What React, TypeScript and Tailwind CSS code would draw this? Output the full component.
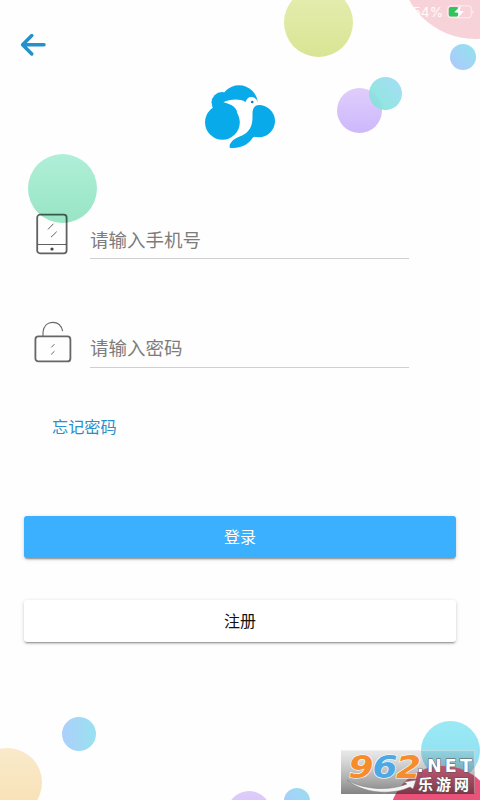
import { useState } from "react";

// Decorative bubbles floating freely behind the form
const bubbles = [
    "left-[284px] top-[-12px] size-[69px] bg-linear-to-b from-[#e5eeb1] to-[#d9e594]",
    "left-[400px] top-[-111px] size-[150px] bg-[#f7d3d9]",
    "left-[450px] top-[44px] size-[26px] bg-linear-to-tr from-[#adc7fd] to-[#91e3ed]",
    "left-[337px] top-[88px] size-[45px] bg-linear-to-b from-[#e0cdfb] to-[#cdb8fb]",
    "left-[369px] top-[77px] size-[33px] bg-linear-to-tr from-[#7fe5d4]/90 to-[#9bd9f6]/90",
    "left-[28px] top-[154px] size-[69px] bg-linear-to-b from-[#afefd8] to-[#98e5c4]",
    "left-[62px] top-[717px] size-[34px] bg-linear-to-r from-[#accffb] to-[#98e1ef]",
    "left-[-27px] top-[748px] size-[69px] bg-linear-to-b from-[#f9eaca] to-[#f8dfb3]",
    "left-[227px] top-[791px] size-[44px] bg-linear-to-b from-[#decdf9] to-[#cdb8fb]",
    "left-[284px] top-[788px] size-[26px] bg-linear-to-tr from-[#adc7fd] to-[#98dfef]",
    "left-[421px] top-[721px] size-[59px] bg-linear-to-b from-[#9aeaf5] to-[#8fdcf0]",
    "left-[389px] top-[766px] size-[108px] bg-[#eb527a]",
];

function BackIcon() {
    return (
        <svg width="28" height="26" viewBox="0 0 28 26" fill="none" stroke="#2590ca" strokeWidth="3.5" strokeLinecap="round" strokeLinejoin="round">
            <path d="M12.8 3.6 3.6 12.7l9.2 9.2M4 12.7h21" />
        </svg>
    );
}

function Logo() {
    return (
        <svg width="70" height="64" viewBox="0 0 70 64">
            <g fill="#08aae9">
                <circle cx="17" cy="17.6" r="10.5" />
                <circle cx="34" cy="19" r="18.8" />
                <path d="M14 18h26v19H14z" />
                <circle cx="53.8" cy="36.1" r="16.2" />
                <path d="M24.7 62.7c-.5-5 2.3-9.5 7-11.9L44 38l8 13.5c-2.6.2-3.9.7-4.9 2-4.7 7.2-13 10.3-22.4 9.2Z" />
            </g>
            {/* bird body, the left puff is drawn over its side */}
            <path
                fill="#fff"
                d="M18.3 17.3c7-3.4 16.5-3.6 22.3-.4 1-3.4 3.6-5.4 6.6-4.8 3.6.7 5.8 3.4 6.6 7.8-4.8.6-6.4 4-6.3 9 .1 7.5-.2 13.4-6 18.8-5.4 4.4-13.2 4.3-17 12.3l-3-8L33 38l-1.3-12.5c-2.5-4.9-7.6-6.8-13.4-8.2Z"
            />
            <circle cx="17.4" cy="37.3" r="17.4" fill="#08aae9" />
            <circle cx="47.2" cy="17" r="1.3" fill="#087fba" />
        </svg>
    );
}

function PhoneIcon() {
    return (
        <svg width="32" height="42" viewBox="0 0 32 42" fill="none" stroke="#000" strokeOpacity=".62">
            <rect x="1.2" y="1.7" width="29.4" height="38.6" rx="2.8" strokeWidth="1.8" />
            <path d="M2 31.5h28" strokeWidth="1" />
            <path d="m12 16.4 5.5-5.7M15 24.2l5.7-5.5" strokeWidth="1" />
            <circle cx="16" cy="36" r="1.6" fill="#444" stroke="none" />
        </svg>
    );
}

function LockIcon() {
    return (
        <svg width="38" height="42" viewBox="0 0 38 42" fill="none" stroke="#666">
            <rect x="1.4" y="15.4" width="35" height="25" rx="3" strokeWidth="1.8" />
            <path d="M9 15V11C9.7 5 13.5 1.4 18.7 1.4c5.2 0 8.8 3.6 10 8.8" strokeWidth="1.1" />
            <path d="m17.4 26.3 3-3.1M17.2 33.4l3.3-3.2" strokeWidth="1" />
        </svg>
    );
}

function Battery() {
    return (
        <svg width="28" height="14" viewBox="0 0 28 14">
            <rect x=".8" y=".8" width="23.5" height="12" rx="3" fill="none" stroke="#fff" strokeOpacity=".65" />
            <path d="M25.5 5v4c1.6-.4 1.6-3.6 0-4Z" fill="#fff" fillOpacity=".65" />
            <rect x="1.8" y="2" width="9.5" height="9.5" rx="1.8" fill="#2ec55b" />
            <path d="M13.8.8 7.2 7.3l4.3.5-1 5.2 6.4-6.8-4.2-.4Z" fill="#fff" />
        </svg>
    );
}

function SiteBadge() {
    return (
        <svg width="134" height="60" viewBox="0 -8 134 60" fontFamily="'Liberation Sans', 'Noto Sans CJK SC', sans-serif" fontWeight="bold">
            <defs>
                <linearGradient id="plate" x1="0" x2="0" y1="0" y2="1">
                    <stop offset="0" stopColor="#777" stopOpacity=".15" />
                    <stop offset="1" stopColor="#222" stopOpacity=".56" />
                </linearGradient>
            </defs>
            <rect width="134" height="44" fill="url(#plate)" />
            <path d="M.5.5h133v43" fill="none" stroke="#fff" strokeOpacity=".35" />
            <path d="M6 30c17 10 43 11 60 4l-3-2 12-2-3 9-3-2C50 46 21 43 6 30Z" fill="#f4f4f4" stroke="#777" strokeWidth=".5" />
            <g fontFamily="'DejaVu Sans', sans-serif" fontStyle="italic" fontSize="31.5" stroke="#fff" strokeWidth="1.2" paintOrder="stroke">
                <text x="7.5" y="27.5" fill="#f68c2c" textLength="25" lengthAdjust="spacingAndGlyphs">9</text>
                <text x="31.5" y="27.5" fill="#4da9e5" textLength="25" lengthAdjust="spacingAndGlyphs">6</text>
                <text x="55" y="27.5" fill="#f68c2c" textLength="25" lengthAdjust="spacingAndGlyphs">2</text>
            </g>
            <g fill="#fff" stroke="#555" strokeWidth="1" paintOrder="stroke">
                <text x="76" y="22" fontFamily="'DejaVu Sans', sans-serif" fontSize="17.5" textLength="55">.NET</text>
                <text x="77" y="40" fontSize="15" textLength="51">乐游网</text>
            </g>
        </svg>
    );
}

export default function App() {
    const [phone, setPhone] = useState<string>("");
    const [password, setPassword] = useState<string>("");

    const handleSubmit = (e: React.FormEvent) => {
        e.preventDefault();
    };

    return (
        <div className="relative isolate h-[800px] w-[480px] overflow-hidden bg-[#fefefe] font-['Roboto','Noto_Sans_CJK_SC',sans-serif]">
            {bubbles.map((bubble) => (
                <div key={bubble} className={`absolute -z-10 rounded-full ${bubble}`} />
            ))}

            <div className="flex h-6 items-center justify-end pr-[5px] text-white/90">
                <span className="mr-1 pt-px font-['Inter',sans-serif] text-[13.6px] leading-none">54%</span>
                <Battery />
            </div>

            <header className="flex h-[61px] px-[19px] pt-2">
                <button type="button" aria-label="返回" className="h-[26px]">
                    <BackIcon />
                </button>
            </header>
            <div className="flex h-[128px] justify-center">
                <Logo />
            </div>

            <form onSubmit={handleSubmit}>
                <div className="flex h-[46px] items-start pl-9">
                    <PhoneIcon />
                    <input
                        type="text"
                        aria-label="手机号"
                        placeholder="请输入手机号"
                        className="ml-[22px] h-[46px] w-[319px] border-b border-[#cfcfcf] pt-[10px] text-[18.5px] placeholder-[#7c7c7c] outline-none"
                        value={phone}
                        onChange={(e) => setPhone(e.target.value)}
                    />
                </div>
                <div className="mt-[62px] flex h-[47px] items-start pl-[34px]">
                    <LockIcon />
                    <input
                        type="password"
                        aria-label="密码"
                        placeholder="请输入密码"
                        className="ml-[18px] h-[47px] w-[319px] border-b border-[#cfcfcf] pt-[10px] text-[18.5px] placeholder-[#7c7c7c] outline-none"
                        value={password}
                        onChange={(e) => setPassword(e.target.value)}
                    />
                </div>
                <div className="mt-12 flex h-6 pl-[52px]">
                    <button type="button" className="text-[16.2px] leading-6 text-[#2b8fc9]">
                        忘记密码
                    </button>
                </div>
                <div className="mt-[76px] flex flex-col gap-[42px] px-6">
                    <button
                        type="submit"
                        className="h-[42px] rounded-[3px] bg-[#3ab0ff] pt-0.5 text-base text-white shadow-[0_2px_2px_-1px_rgba(0,0,0,0.4),0_1px_4px_rgba(0,0,0,0.16)]"
                    >
                        登录
                    </button>
                    <button
                        type="button"
                        className="h-[42px] rounded-[3px] bg-white pt-0.5 text-base text-[#111] shadow-[0_2px_2px_-1px_rgba(0,0,0,0.4),0_1px_4px_rgba(0,0,0,0.16)]"
                    >
                        注册
                    </button>
                </div>
            </form>

            <div className="absolute left-[341px] top-[742px]">
                <SiteBadge />
            </div>
        </div>
    );
}
